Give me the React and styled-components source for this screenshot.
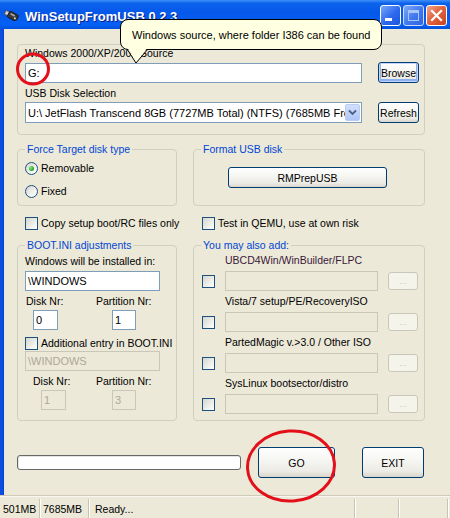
import React from 'react';
import styled, { createGlobalStyle, css } from 'styled-components';

const GlobalStyle = createGlobalStyle`
  html, body {
    margin: 0;
    padding: 0;
    background: #ECE9D8;
  }
  body {
    font-family: "Liberation Sans", Arial, sans-serif;
    font-size: 10.5px;
    color: #000;
  }
  #root {
    width: 450px;
    height: 518px;
    overflow: hidden;
  }
`;

const Window = styled.div`
  position: relative;
  width: 450px;
  height: 518px;
  display: flex;
  flex-direction: column;
  background: #ECE9D8;
  overflow: hidden;
`;

/* ---------- title bar ---------- */

const TitleBar = styled.div`
  flex: none;
  height: 29px;
  box-sizing: border-box;
  padding: 2px 3px 0 4px;
  display: flex;
  align-items: center;
  background: linear-gradient(180deg, #3D8FF7 0%, #0B61EC 12%, #0558E9 45%, #0461F5 85%, #0350DD 100%);
`;

const TitleText = styled.div`
  margin-left: 6px;
  margin-top: 2px;
  color: #fff;
  font-weight: bold;
  font-size: 13px;
  line-height: 15px;
  text-shadow: 1px 1px 0 #0A1E8A;
`;

const CaptionButtons = styled.div`
  margin-left: auto;
  display: flex;
  gap: 2px;
`;

const CapButton = styled.div`
  width: 21px;
  height: 21px;
  box-sizing: border-box;
  border: 1px solid #fff;
  border-radius: 3px;
  display: flex;
  align-items: center;
  justify-content: center;
  background: ${({ $close }) => $close
    ? 'linear-gradient(135deg, #F2A48C 0%, #E2653F 45%, #C8421F 100%)'
    : 'linear-gradient(135deg, #77A8FB 0%, #2C68EE 55%, #1E55D9 100%)'};
  ${({ $disabled }) => $disabled && css`
    background: linear-gradient(135deg, #7FA9F6 0%, #3F78EE 55%, #2F64DE 100%);
    border-color: #C9DAFB;
  `}
`;

const AppIcon = () => (
  <svg width="15" height="11" viewBox="0 0 15 11">
    <g transform="rotate(28 7.5 5.5)">
      <rect x="0.5" y="3.5" width="4" height="4" fill="#D8D8D8" stroke="#555" strokeWidth="0.8" />
      <rect x="4" y="2.2" width="10" height="6.6" rx="1.6" fill="#3A3A3A" stroke="#111" strokeWidth="0.8" />
      <rect x="6" y="3.6" width="4.5" height="1.6" fill="#A8A8A8" />
      <circle cx="11.8" cy="6.3" r="0.9" fill="#EEE" />
    </g>
  </svg>
);

const MinGlyph = () => (
  <svg width="19" height="19" viewBox="0 0 19 19">
    <rect x="4" y="12" width="7" height="3" fill="#fff" />
  </svg>
);

const MaxGlyph = () => (
  <svg width="19" height="19" viewBox="0 0 19 19">
    <rect x="4.5" y="4.5" width="10" height="10" fill="none" stroke="#A9C4F7" strokeWidth="1" />
    <rect x="4" y="4" width="11" height="3" fill="#A9C4F7" />
  </svg>
);

const CloseGlyph = () => (
  <svg width="19" height="19" viewBox="0 0 19 19">
    <path d="M5 5 L14 14 M14 5 L5 14" stroke="#fff" strokeWidth="2.2" strokeLinecap="square" />
  </svg>
);

/* ---------- client area ---------- */

const Client = styled.div`
  flex: 1;
  display: flex;
  flex-direction: column;
  padding: 15px 0 0 14px;
  border-left: 3px solid #0B4FE2;
  box-shadow: inset 1px 0 0 #0A3FD0;
`;

const Group = styled.div`
  position: relative;
  box-sizing: border-box;
  width: ${({ $w }) => $w}px;
  height: ${({ $h }) => $h}px;
  border: 1px solid #D0D0BF;
  border-radius: 4px;
  padding: ${({ $pad }) => $pad || '0'};
`;

const Legend = styled.span`
  position: absolute;
  top: -7px;
  left: 7px;
  padding: 0 2px;
  background: #ECE9D8;
  color: #0046D5;
  line-height: 13px;
  white-space: nowrap;
`;

const Row = styled.div`
  display: flex;
  gap: 16px;
  margin-top: ${({ $top }) => $top || 0}px;
`;

const Label = styled.div`
  line-height: 13px;
  white-space: nowrap;
  margin-top: ${({ $top }) => $top || 0}px;
  margin-bottom: ${({ $bottom }) => $bottom ?? 2}px;
`;

const FieldRow = styled.div`
  display: flex;
  align-items: center;
  gap: 16px;
`;

const TextBox = styled.div`
  box-sizing: border-box;
  width: ${({ $w }) => $w}px;
  height: ${({ $h }) => $h || 20}px;
  margin-left: ${({ $indent }) => $indent || 0}px;
  margin-top: ${({ $top }) => $top || 0}px;
  padding-left: 2px;
  border: 1px solid #7F9DB9;
  background: #fff;
  font-size: 11px;
  line-height: ${({ $h }) => ($h || 20) - 2}px;
  white-space: nowrap;
  overflow: hidden;
  flex: none;
  ${({ $disabled }) => $disabled && css`
    border-color: #C9C7BA;
    background: #ECE9D8;
    color: #ACA899;
  `}
`;

const Select = styled.div`
  box-sizing: border-box;
  width: 337px;
  height: 21px;
  display: flex;
  align-items: center;
  padding: 0 1px 0 2px;
  border: 1px solid #7F9DB9;
  background: #fff;
  font-size: 11px;
`;

const SelectText = styled.span`
  flex: 1;
  overflow: hidden;
  white-space: nowrap;
`;

const DropButton = styled.span`
  flex: none;
  width: 15px;
  height: 17px;
  box-sizing: border-box;
  display: flex;
  align-items: center;
  justify-content: center;
  border: 1px solid #B8CCF4;
  border-radius: 2px;
  background: linear-gradient(180deg, #D3E0FC 0%, #BCD0FA 60%, #AFC6F7 100%);
`;

const Button = styled.div`
  flex: none;
  box-sizing: border-box;
  width: ${({ $w }) => $w}px;
  height: ${({ $h }) => $h}px;
  margin-left: ${({ $left }) => $left || 0}px;
  display: flex;
  align-items: center;
  justify-content: center;
  border: 1px solid #003C74;
  border-radius: 3px;
  background: linear-gradient(180deg, #FFFFFF 0%, #F6F6F3 40%, #ECEBE5 80%, #D9D5CA 100%);
  white-space: nowrap;
  ${({ $default }) => $default && css`
    box-shadow: inset 0 0 0 1px #C2D6FB, inset 0 -1px 0 2px #8DB0F1;
  `}
  ${({ $disabled }) => $disabled && css`
    border-color: #C9C7BA;
    background: #F5F4EA;
    color: #C9C7BA;
    font-size: 9px;
  `}
`;

const Option = styled.div`
  display: flex;
  align-items: center;
  gap: 3px;
  height: 13px;
  line-height: 13px;
  white-space: nowrap;
  box-sizing: border-box;
  width: ${({ $w }) => ($w ? `${$w}px` : 'auto')};
  padding-left: ${({ $indent }) => $indent || 0}px;
  margin-top: ${({ $top }) => $top || 0}px;
`;

const RadioList = styled.div`
  display: flex;
  flex-direction: column;
  gap: 10px;
`;

const Radio = styled.span`
  flex: none;
  width: 13px;
  height: 13px;
  box-sizing: border-box;
  border-radius: 50%;
  border: 1px solid #1C5180;
  background: linear-gradient(135deg, #D6D6CF 0%, #F0F0EC 55%, #FFFFFF 100%);
  display: flex;
  align-items: center;
  justify-content: center;
  ${({ $checked }) => $checked && css`
    &::after {
      content: '';
      width: 5px;
      height: 5px;
      border-radius: 50%;
      background: radial-gradient(circle at 35% 35%, #8BEA8B 0%, #2FB12F 55%, #168A16 100%);
    }
  `}
`;

const CheckBox = styled.span`
  flex: none;
  width: 13px;
  height: 13px;
  box-sizing: border-box;
  border: 1px solid #1C5180;
  background: linear-gradient(135deg, #D6D6CF 0%, #EDEDE8 55%, #FFFFFF 100%);
`;

const NrGrid = styled.div`
  display: grid;
  grid-template-columns: 71px auto;
  row-gap: 2px;
  justify-items: start;
  margin-top: ${({ $top }) => $top || 0}px;
`;

const NrLabel = styled.span`
  line-height: 13px;
  margin-left: ${({ $indent }) => $indent || 0}px;
`;

const ItemList = styled.div`
  display: flex;
  flex-direction: column;
  gap: 4px;
`;

const ItemLabel = styled.div`
  margin-left: 23px;
  margin-bottom: 4px;
  line-height: 13px;
  white-space: nowrap;
  color: ${({ $tint }) => $tint || '#000'};
`;

const ItemRow = styled.div`
  display: flex;
  align-items: center;
  gap: 10px;
`;

const BottomRow = styled.div`
  display: flex;
  align-items: center;
  margin-top: 26px;
`;

const Progress = styled.div`
  width: 224px;
  height: 15px;
  box-sizing: border-box;
  border: 1px solid #686868;
  border-radius: 3px;
  background: #fff;
  box-shadow: inset 1px 1px 0 #E4E4E4;
`;

/* ---------- status bar ---------- */

const StatusBar = styled.div`
  flex: none;
  height: 23px;
  box-sizing: border-box;
  display: flex;
  border-top: 1px solid #CFCBB8;
  box-shadow: inset 0 1px 0 #F8F7F1;
  padding-top: 3px;
`;

const Panel = styled.div`
  width: ${({ $w }) => $w}px;
  box-sizing: border-box;
  padding: 4px 0 0 ${({ $pad }) => $pad ?? 3}px;
  line-height: 13px;
  border-right: 1px solid #C8C4B2;
  box-shadow: 1px 0 0 #FFFFFF;
  white-space: nowrap;
`;

/* ---------- overlays ---------- */

const Balloon = styled.div`
  position: absolute;
  left: 120px;
  top: 19px;
  width: 262px;
  height: 31px;
  box-sizing: border-box;
  border: 1px solid #000;
  border-radius: 8px;
  background: #FFFFE1;
  padding: 1px 0 0 11px;
  display: flex;
  align-items: center;
  font-size: 11px;
  white-space: nowrap;
`;

const BalloonTail = styled.svg`
  position: absolute;
  left: 120px;
  top: 47px;
`;

const Annotations = styled.svg`
  position: absolute;
  left: 0;
  top: 0;
  pointer-events: none;
`;

const extras = [
  { label: 'UBCD4Win/WinBuilder/FLPC', tint: '#3A1838' },
  { label: 'Vista/7 setup/PE/RecoveryISO' },
  { label: 'PartedMagic v.>3.0 / Other ISO' },
  { label: 'SysLinux bootsector/distro' },
];

export default function App() {
  return (
    <>
      <GlobalStyle />
      <Window>
        <TitleBar>
          <AppIcon />
          <TitleText>WinSetupFromUSB 0.2.3</TitleText>
          <CaptionButtons>
            <CapButton><MinGlyph /></CapButton>
            <CapButton $disabled><MaxGlyph /></CapButton>
            <CapButton $close><CloseGlyph /></CapButton>
          </CaptionButtons>
        </TitleBar>

        <Client>
          <Group $w={408} $h={91} $pad="2px 0 0 7px">
            <Label>Windows 2000/XP/2003 Source</Label>
            <FieldRow>
              <TextBox $w={337}>G:</TextBox>
              <Button $w={41} $h={21} $default>Browse</Button>
            </FieldRow>
            <Label $top={4}>USB Disk Selection</Label>
            <FieldRow>
              <Select>
                <SelectText>U:\ JetFlash Transcend 8GB (7727MB Total) (NTFS) (7685MB Free)</SelectText>
                <DropButton>
                  <svg width="9" height="7" viewBox="0 0 9 7">
                    <path d="M1 1.5 L4.5 5 L8 1.5" fill="none" stroke="#4D6185" strokeWidth="1.8" />
                  </svg>
                </DropButton>
              </Select>
              <Button $w={41} $h={21}>Refresh</Button>
            </FieldRow>
          </Group>

          <Row $top={14}>
            <Group $w={160} $h={57} $pad="12px 0 0 7px">
              <Legend>Force Target disk type</Legend>
              <RadioList>
                <Option><Radio $checked />Removable</Option>
                <Option><Radio />Fixed</Option>
              </RadioList>
            </Group>
            <Group $w={232} $h={57} $pad="17px 0 0 34px">
              <Legend>Format USB disk</Legend>
              <Button $w={159} $h={21}>RMPrepUSB</Button>
            </Group>
          </Row>

          <Row $top={11}>
            <Option $w={160} $indent={8}><CheckBox />Copy setup boot/RC files only</Option>
            <Option $w={232} $indent={9}><CheckBox />Test in QEMU, use at own risk</Option>
          </Row>

          <Row $top={15}>
            <Group $w={160} $h={176} $pad="9px 0 0 7px">
              <Legend>BOOT.INI adjustments</Legend>
              <Label $bottom={3}>Windows will be installed in:</Label>
              <TextBox $w={135}>\WINDOWS</TextBox>
              <NrGrid $top={4}>
                <NrLabel $indent={1}>Disk Nr:</NrLabel>
                <NrLabel>Partition Nr:</NrLabel>
                <TextBox $w={25} $indent={8}>0</TextBox>
                <TextBox $w={24} $indent={16}>1</TextBox>
              </NrGrid>
              <Option $top={7}><CheckBox />Additional entry in BOOT.INI</Option>
              <TextBox $w={135} $top={1} $disabled>\WINDOWS</TextBox>
              <NrGrid $top={4}>
                <NrLabel $indent={8}>Disk Nr:</NrLabel>
                <NrLabel>Partition Nr:</NrLabel>
                <TextBox $w={25} $indent={16} $disabled>1</TextBox>
                <TextBox $w={24} $indent={16} $disabled>3</TextBox>
              </NrGrid>
            </Group>

            <Group $w={232} $h={176} $pad="8px 0 0 8px">
              <Legend>You may also add:</Legend>
              <ItemList>
                {extras.map((item) => (
                  <div key={item.label}>
                    <ItemLabel $tint={item.tint}>{item.label}</ItemLabel>
                    <ItemRow>
                      <CheckBox />
                      <TextBox $w={153} $disabled />
                      <Button $w={30} $h={18} $disabled>...</Button>
                    </ItemRow>
                  </div>
                ))}
              </ItemList>
            </Group>
          </Row>

          <BottomRow>
            <Progress />
            <Button $w={77} $h={31} $left={17}>GO</Button>
            <Button $w={62} $h={31} $left={27}>EXIT</Button>
          </BottomRow>
        </Client>

        <StatusBar>
          <Panel $w={40}>501MB</Panel>
          <Panel $w={49}>7685MB</Panel>
          <Panel $w={266} $pad={6}>Ready...</Panel>
          <Panel $w={44} />
          <Panel $w={49} />
        </StatusBar>

        <Balloon>Windows source, where folder I386 can be found</Balloon>
        <BalloonTail width="40" height="20" viewBox="0 0 40 20">
          <polygon points="7,0 28,0 16,16" fill="#FFFFE1" />
          <polyline points="7,2 16,16 28,2" fill="none" stroke="#000" strokeWidth="1" />
        </BalloonTail>

        <Annotations width="450" height="518" viewBox="0 0 450 518">
          <ellipse cx="33" cy="69" rx="15.5" ry="15" fill="none" stroke="#E3101A" strokeWidth="3" />
          <ellipse cx="291" cy="466" rx="43.5" ry="35" fill="none" stroke="#E3101A" strokeWidth="3"
            transform="rotate(-4 291 466)" />
        </Annotations>
      </Window>
    </>
  );
}
